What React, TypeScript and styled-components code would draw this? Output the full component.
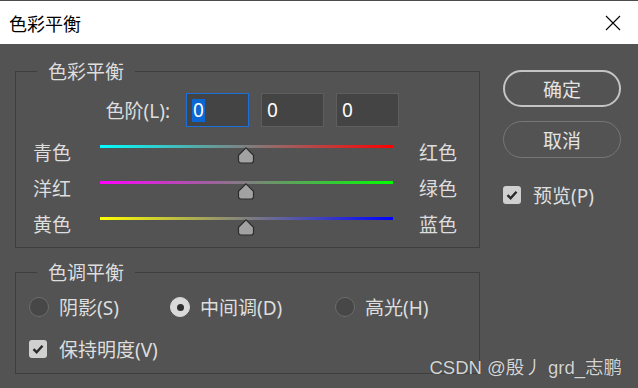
import React from "react";
import styled, { createGlobalStyle } from "styled-components";

const GlobalStyle = createGlobalStyle`
  html, body {
    margin: 0;
    padding: 0;
    background: #535353;
  }
  #root {
    width: 638px;
    height: 388px;
  }
`;

const Window = styled.div`
  position: relative;
  box-sizing: border-box;
  width: 638px;
  height: 388px;
  display: flex;
  flex-direction: column;
  background: #535353;
  border-top: 1px solid #4c4c4c;
  font-family: "Noto Sans", "Noto Sans CJK SC", sans-serif;
  color: #dedede;
  overflow: hidden;
`;

const TitleBar = styled.div`
  height: 43px;
  flex: none;
  display: flex;
  align-items: center;
  justify-content: space-between;
  padding: 0 17px 0 9px;
  background: #ffffff;
`;

const Title = styled.div`
  font-size: 18px;
  color: #000;
  font-family: "Noto Sans CJK SC", sans-serif;
`;

const Body = styled.div`
  flex: 1;
  display: flex;
`;

const LeftColumn = styled.div`
  width: 465px;
  margin-left: 15px;
  display: flex;
  flex-direction: column;
`;

const Group = styled.div<{ $top: number; $bottom: number }>`
  box-sizing: border-box;
  margin-top: ${(p) => p.$top}px;
  padding-bottom: ${(p) => p.$bottom}px;
  border: 1px solid #3e3e3e;
  display: flex;
  flex-direction: column;
`;

const Legend = styled.div`
  align-self: flex-start;
  margin: -11px 0 0 21px;
  padding: 0 11px;
  height: 20px;
  line-height: 20px;
  font-size: 19px;
  background: #535353;
  font-family: "Noto Sans CJK SC", sans-serif;
`;

const LevelRow = styled.div`
  display: flex;
  align-items: center;
  height: 34px;
  margin-top: 12px;
`;

const LevelLabel = styled.div`
  width: 154px;
  margin-right: 16px;
  text-align: right;
  font-size: 19px;
`;

const Inputs = styled.div`
  display: flex;
  gap: 12px;
`;

const LevelInput = styled.div<{ $focus?: boolean }>`
  box-sizing: border-box;
  width: 63px;
  height: 34px;
  display: flex;
  align-items: center;
  padding-left: 5px;
  background: #444444;
  border: 1px solid ${(p) => (p.$focus ? "#1d6fd6" : "#5e5e5e")};
  font-size: 19px;
  color: #ffffff;
`;

const Selected = styled.span`
  background: #0b67d4;
  padding: 0 1px;
  line-height: 23px;
`;

const Sliders = styled.div`
  margin-top: 6px;
  display: flex;
  flex-direction: column;
`;

const SliderRow = styled.div`
  display: grid;
  grid-template-columns: 84px 293px auto;
  height: 36px;
  align-items: center;
`;

const SideLabel = styled.div<{ $pad: number }>`
  padding-left: ${(p) => p.$pad}px;
  font-size: 19px;
  font-family: "Noto Sans CJK SC", sans-serif;
`;

const Track = styled.div`
  position: relative;
  align-self: stretch;
`;

const Bar = styled.div<{ $from: string; $to: string }>`
  margin-top: 12px;
  height: 3px;
  background: linear-gradient(to right, ${(p) => p.$from}, ${(p) => p.$to});
`;

const Thumb = styled.svg`
  position: absolute;
  top: 14px;
  left: 137px;
`;

const RadioRow = styled.div`
  display: grid;
  grid-template-columns: 141px 165px auto;
  height: 30px;
  margin-top: 10px;
  padding-left: 13px;
  align-items: center;
`;

const Option = styled.div`
  display: flex;
  align-items: center;
  gap: 10px;
  font-size: 19px;
`;

const RadioDot = styled.div<{ $checked?: boolean }>`
  box-sizing: border-box;
  width: 20px;
  height: 20px;
  border-radius: 50%;
  display: flex;
  align-items: center;
  justify-content: center;
  background: ${(p) => (p.$checked ? "#d9d9d9" : "#474747")};
  border: 1px solid ${(p) => (p.$checked ? "#d9d9d9" : "#6c6c6c")};
  &::after {
    content: "";
    display: ${(p) => (p.$checked ? "block" : "none")};
    width: 7px;
    height: 7px;
    border-radius: 50%;
    background: #2e2e2e;
  }
`;

const CheckRow = styled.div`
  display: flex;
  align-items: center;
  gap: 12px;
  height: 30px;
  margin-top: 12px;
  padding-left: 13px;
  font-size: 19px;
`;

const Box = styled.div`
  box-sizing: border-box;
  width: 18px;
  height: 18px;
  border-radius: 3px;
  background: #d0d0d0;
  display: flex;
  align-items: center;
  justify-content: center;
`;

const RightColumn = styled.div`
  margin-left: 23px;
  padding-top: 26px;
  display: flex;
  flex-direction: column;
`;

const Button = styled.div<{ $primary?: boolean }>`
  box-sizing: border-box;
  width: 118px;
  height: 37px;
  margin-bottom: 14px;
  border-radius: 19px;
  border: ${(p) => (p.$primary ? "2px solid #c4c4c4" : "1.5px solid #777777")};
  display: flex;
  align-items: center;
  justify-content: center;
  font-size: 19px;
  color: #e4e4e4;
  font-family: "Noto Sans CJK SC", sans-serif;
`;

const Preview = styled(CheckRow)`
  margin-top: 8px;
  padding-left: 0;
`;

const Watermark = styled.div`
  position: absolute;
  right: 16px;
  bottom: 9px;
  font-family: "Liberation Sans", "Noto Sans CJK SC", sans-serif;
  font-size: 18.5px;
  color: #d4d4d4;
  text-shadow: 0 0 1px #333;
`;

const Check = () => (
  <Box>
    <svg width="12" height="10" viewBox="0 0 12 10">
      <path d="M1.5 5.2 L4.6 8.2 L10.5 1.8" fill="none" stroke="#2a2a2a" strokeWidth="2.4" />
    </svg>
  </Box>
);

const sliders = [
  { left: "青色", right: "红色", from: "#00ffff", to: "#ff0000" },
  { left: "洋红", right: "绿色", from: "#ff00ff", to: "#00ff00" },
  { left: "黄色", right: "蓝色", from: "#ffff00", to: "#0000ff" },
];

export default function App() {
  return (
    <>
      <GlobalStyle />
      <Window>
        <TitleBar>
          <Title>色彩平衡</Title>
          <svg width="16" height="16" viewBox="0 0 16 16">
            <path d="M1 1 L15 15 M15 1 L1 15" stroke="#000" strokeWidth="1.1" />
          </svg>
        </TitleBar>
        <Body>
          <LeftColumn>
            <Group $top={27} $bottom={6}>
              <Legend>色彩平衡</Legend>
              <LevelRow>
                <LevelLabel>色阶(L):</LevelLabel>
                <Inputs>
                  <LevelInput $focus>
                    <Selected>0</Selected>
                  </LevelInput>
                  <LevelInput>0</LevelInput>
                  <LevelInput>0</LevelInput>
                </Inputs>
              </LevelRow>
              <Sliders>
                {sliders.map((s) => (
                  <SliderRow key={s.left}>
                    <SideLabel $pad={17}>{s.left}</SideLabel>
                    <Track>
                      <Bar $from={s.from} $to={s.to} />
                      <Thumb width="18" height="17" viewBox="0 0 18 17">
                        <path
                          d="M9 0.8 L16.5 8.3 V13.5 Q16.5 16 14 16 H4 Q1.5 16 1.5 13.5 V8.3 Z"
                          fill="#a2a2a2"
                          stroke="#2c2c2c"
                          strokeWidth="1.2"
                        />
                      </Thumb>
                    </Track>
                    <SideLabel $pad={26}>{s.right}</SideLabel>
                  </SliderRow>
                ))}
              </Sliders>
            </Group>
            <Group $top={24} $bottom={9}>
              <Legend>色调平衡</Legend>
              <RadioRow>
                <Option>
                  <RadioDot />
                  阴影(S)
                </Option>
                <Option>
                  <RadioDot $checked />
                  中间调(D)
                </Option>
                <Option>
                  <RadioDot />
                  高光(H)
                </Option>
              </RadioRow>
              <CheckRow>
                <Check />
                保持明度(V)
              </CheckRow>
            </Group>
          </LeftColumn>
          <RightColumn>
            <Button $primary>确定</Button>
            <Button>取消</Button>
            <Preview>
              <Check />
              预览(P)
            </Preview>
          </RightColumn>
        </Body>
        <Watermark>CSDN @殷丿 grd_志鹏</Watermark>
      </Window>
    </>
  );
}
